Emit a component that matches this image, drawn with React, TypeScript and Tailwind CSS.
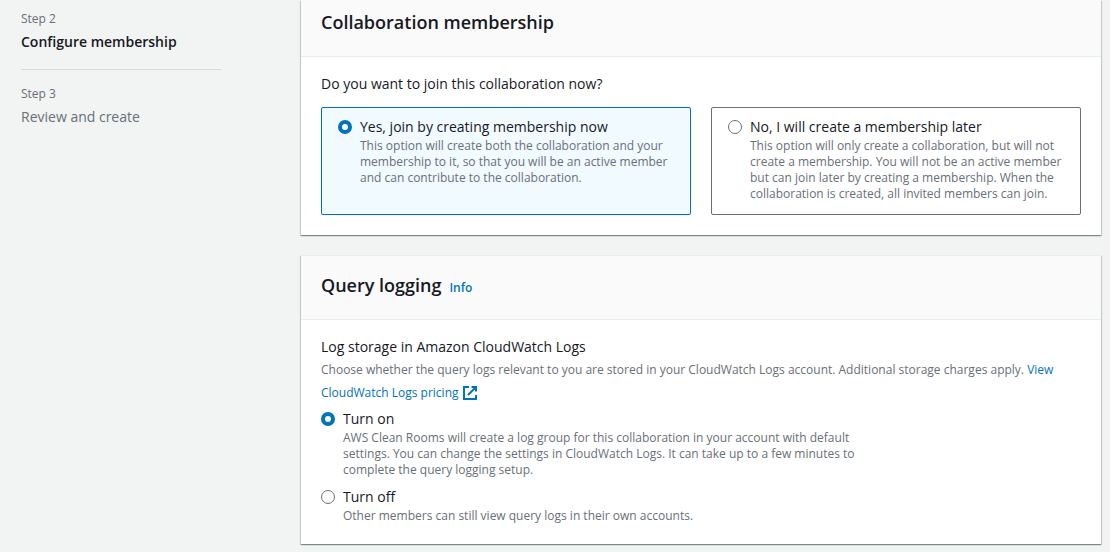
import React, { useState } from "react";

type ChoiceProps = {
  name: string;
  title: string;
  text: string;
  checked: boolean;
  onSelect: () => void;
};

function Choice({ name, title, text, checked, onSelect }: ChoiceProps) {
  return (
    <>
      <input
        type="radio"
        name={name}
        aria-label={title}
        checked={checked}
        onChange={onSelect}
        className="mt-1 size-3.5 shrink-0 appearance-none rounded-full border border-[#687078] bg-white checked:border-[4px] checked:border-[#0073bb]"
      />
      <span className="flex min-w-0 flex-col">
        <span className="text-sm leading-[22px] text-[#16191f]">{title}</span>
        <span className="text-xs leading-4 text-[#687078]">{text}</span>
      </span>
    </>
  );
}

function Tile(props: ChoiceProps) {
  return (
    <label
      className={
        props.checked
          ? "flex flex-1 gap-2 rounded-xs border border-[#0073bb] bg-[#f1faff] pt-2 pr-4 pb-3 pl-4"
          : "flex flex-1 gap-2 rounded-xs border border-[#687078] bg-white pt-2 pr-4 pb-3 pl-4"
      }
    >
      <Choice {...props} />
    </label>
  );
}

function ExternalIcon() {
  return (
    <svg
      viewBox="0 0 16 16"
      className="inline size-4 align-text-bottom"
      fill="none"
      stroke="currentColor"
      strokeWidth="2"
      aria-hidden="true"
    >
      <path d="M7 2H2v12h12V10M9.500 2H14v4.500M14 2 6 10" />
    </svg>
  );
}

const card =
  "bg-white shadow-[0_1px_1px_0_rgba(0,28,36,0.3),1px_1px_1px_0_rgba(0,28,36,0.15),-1px_1px_1px_0_rgba(0,28,36,0.15)]";

export default function App() {
  const [join, setJoin] = useState("yes");
  const [logging, setLogging] = useState("on");

  return (
    <div className="flex min-h-screen bg-[#f2f3f3] pr-[9px] font-['Open_Sans','Noto_Sans',sans-serif] text-sm text-[#16191f]">
      <nav aria-label="Steps" className="w-[301px] shrink-0 pt-[11px] pr-20 pl-[21px]">
        <ol>
          <li className="border-b border-[#d5dbdb] pb-[17px]">
            <div className="text-xs leading-4 text-[#687078]">Step 2</div>
            <div className="mt-1 leading-[21px] font-semibold">Configure membership</div>
          </li>
          <li className="pt-4 text-[#687078]">
            <div className="text-xs leading-4">Step 3</div>
            <div className="mt-1 leading-[21px]">Review and create</div>
          </li>
        </ol>
      </nav>

      <main className="flex min-w-0 flex-1 flex-col gap-5 pb-2">
        <section className={card}>
          <header className="border-b border-[#eaeded] bg-[#fafafa] px-5 pt-[11px] pb-[23px]">
            <h2 className="text-lg leading-[22px] font-semibold">Collaboration membership</h2>
          </header>
          <fieldset className="px-5 pt-4 pb-5">
            <legend className="float-left w-full leading-[22px]">
              Do you want to join this collaboration now?
            </legend>
            <div className="clear-both flex gap-5 pt-3">
              <Tile
                name="join"
                title="Yes, join by creating membership now"
                text="This option will create both the collaboration and your membership to it, so that you will be an active member and can contribute to the collaboration."
                checked={join === "yes"}
                onSelect={() => setJoin("yes")}
              />
              <Tile
                name="join"
                title="No, I will create a membership later"
                text="This option will only create a collaboration, but will not create a membership. You will not be an active member but can join later by creating a membership. When the collaboration is created, all invited members can join."
                checked={join === "no"}
                onSelect={() => setJoin("no")}
              />
            </div>
          </fieldset>
        </section>

        <section className={card}>
          <header className="flex items-baseline gap-2 border-y border-[#eaeded] bg-[#fafafa] px-5 pt-[18px] pb-[23px]">
            <h2 className="text-lg leading-[22px] font-semibold">Query logging</h2>
            <a href="#info" className="text-xs leading-4 font-semibold text-[#0073bb]">
              Info
            </a>
          </header>
          <fieldset className="px-5 pt-4 pb-5">
            <legend className="float-left w-full leading-[22px]">
              Log storage in Amazon CloudWatch Logs
            </legend>
            <p className="clear-both text-xs leading-[23px] text-[#687078]">
              Choose whether the query logs relevant to you are stored in your CloudWatch Logs account.
              Additional storage charges apply.{" "}
              <a href="#pricing" className="text-[#0073bb]">
                View CloudWatch Logs pricing <ExternalIcon />
              </a>
            </p>
            <div className="mt-1 flex max-w-[540px] flex-col gap-2">
              <label className="flex gap-2">
                <Choice
                  name="logging"
                  title="Turn on"
                  text="AWS Clean Rooms will create a log group for this collaboration in your account with default settings. You can change the settings in CloudWatch Logs. It can take up to a few minutes to complete the query logging setup."
                  checked={logging === "on"}
                  onSelect={() => setLogging("on")}
                />
              </label>
              <label className="flex gap-2">
                <Choice
                  name="logging"
                  title="Turn off"
                  text="Other members can still view query logs in their own accounts."
                  checked={logging === "off"}
                  onSelect={() => setLogging("off")}
                />
              </label>
            </div>
          </fieldset>
        </section>
      </main>
    </div>
  );
}
